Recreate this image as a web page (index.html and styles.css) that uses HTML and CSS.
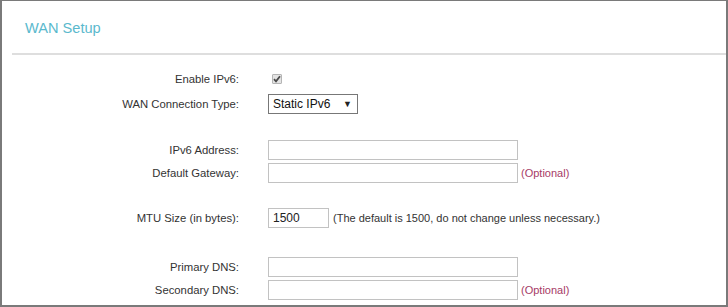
FILE: index.html
```html
<!DOCTYPE html>
<html lang="en">
<head>
    <meta charset="UTF-8">
    <title>WAN Setup</title>
    <link rel="stylesheet" href="styles.css">
</head>
<body>
    <div class="panel">
        <div class="panel-head">WAN Setup</div>

        <div class="group group-top">
            <div class="row">
                <label class="label">Enable IPv6:</label>
                <span class="check">
                    <svg width="8" height="8" viewBox="0 0 8 8"><path d="M1 4.2 L3 6.3 L7 1.2" fill="none" stroke="#4a4a4a" stroke-width="1.8"/></svg>
                </span>
            </div>
            <div class="row">
                <label class="label">WAN Connection Type:</label>
                <div class="select">
                    <span>Static IPv6</span>
                    <span class="arrow">&#9660;</span>
                </div>
            </div>
        </div>

        <div class="group group-addr">
            <div class="row">
                <label class="label">IPv6 Address:</label>
                <input class="text" type="text">
            </div>
            <div class="row">
                <label class="label">Default Gateway:</label>
                <input class="text" type="text">
                <span class="hint">(Optional)</span>
            </div>
        </div>

        <div class="group group-mtu">
            <div class="row">
                <label class="label">MTU Size (in bytes):</label>
                <input class="text short" type="text" value="1500">
                <span class="note">(The default is 1500, do not change unless necessary.)</span>
            </div>
        </div>

        <div class="group group-dns">
            <div class="row">
                <label class="label">Primary DNS:</label>
                <input class="text" type="text">
            </div>
            <div class="row">
                <label class="label">Secondary DNS:</label>
                <input class="text" type="text">
                <span class="hint">(Optional)</span>
            </div>
        </div>
    </div>
</body>
</html>
```

FILE: styles.css
```css
* {
    margin: 0;
    box-sizing: border-box;
}

body {
    font-family: "Liberation Sans", Arial, sans-serif;
    font-size: 11px;
    color: #333;
    background: white;
}

.panel {
    width: 728px;
    height: 307px;
    overflow: hidden;
    border: 2px solid #7a7a7a;
    border-top-width: 1px;
}

.panel-head {
    margin-left: 10px;
    padding: 18px 0 16px 13px;
    font-size: 14.6px;
    line-height: 18px;
    color: #5ab9cd;
    border-bottom: 2px solid #dedede;
}

.group {
    display: flex;
    flex-direction: column;
    gap: 3px;
}

.group-top {
    margin-top: 14px;
    gap: 5px;
}

.group-addr {
    margin-top: 26px;
}

.group-mtu {
    margin-top: 25px;
}

.group-dns {
    margin-top: 29px;
}

.row {
    display: flex;
    align-items: center;
    height: 20px;
}

.label {
    width: 237px;
    margin-right: 29px;
    text-align: right;
    font-size: 11.3px;
}

.check {
    display: flex;
    align-items: center;
    justify-content: center;
    width: 10px;
    height: 10px;
    margin-left: 4px;
    background: #e4e4e4;
    border: 1px solid #b5b5b5;
    border-radius: 1px;
}

.select {
    display: flex;
    align-items: center;
    justify-content: space-between;
    width: 90px;
    height: 20px;
    padding: 0 5px 0 4px;
    border: 1px solid #777;
    color: #111;
    font-size: 12px;
}

.select .arrow {
    font-size: 9px;
    color: #222;
}

.text {
    width: 250px;
    height: 20px;
    padding: 0 4px;
    border: 1px solid #c2c2c2;
    font-family: inherit;
    font-size: 12px;
    color: #222;
    outline: none;
}

.text.short {
    width: 61px;
}

.hint {
    margin-left: 3px;
    color: #a63b66;
}

.note {
    margin-left: 4px;
}
```
